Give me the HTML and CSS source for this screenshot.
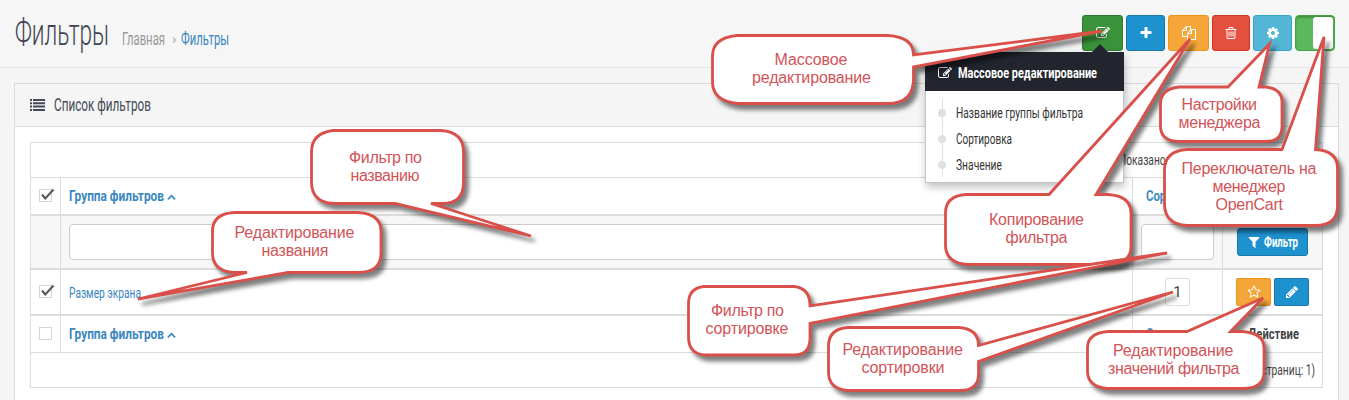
FILE: index.html
```html
<!DOCTYPE html>
<html lang="ru">
<head>
<meta charset="utf-8">
<title>Фильтры</title>
<link rel="stylesheet" href="styles.css">
</head>
<body>
<svg class="defs" width="0" height="0">
  <symbol id="edit" viewBox="0 0 1792 1792"><path d="M888 1184l116-116-152-152-116 116v56h96v96h56zm440-720q-16-16-33 1l-350 350q-17 17-1 33t33-1l350-350q17-17 1-33zm80 594v190q0 119-84.500 203.500t-203.500 84.500h-832q-119 0-203.500-84.500t-84.500-203.500v-832q0-119 84.500-203.500t203.500-84.500h832q63 0 117 25 15 7 18 23 3 17-9 29l-49 49q-14 14-32 8-23-6-45-6h-832q-66 0-113 47t-47 113v832q0 66 47 113t113 47h832q66 0 113-47t47-113v-126q0-13 9-22l64-64q15-15 35-7t20 29zm-96-738l288 288-672 672h-288v-288zm444 132l-92 92-288-288 92-92q28-28 68-28t68 28l152 152q28 28 28 68t-28 68z"/></symbol>
  <symbol id="plus" viewBox="0 0 1792 1792"><path d="M1600 736v192q0 40-28 68t-68 28h-416v416q0 40-28 68t-68 28h-192q-40 0-68-28t-28-68v-416h-416q-40 0-68-28t-28-68v-192q0-40 28-68t68-28h416v-416q0-40 28-68t68-28h192q40 0 68 28t28 68v416h416q40 0 68 28t28 68z"/></symbol>
  <symbol id="copy" viewBox="0 0 1792 1792"><path d="M1696 384q40 0 68 28t28 68v1216q0 40-28 68t-68 28h-960q-40 0-68-28t-28-68v-288h-544q-40 0-68-28t-28-68v-672q0-40 20-88t48-76l408-408q28-28 76-48t88-20h416q40 0 68 28t28 68v328q68-40 128-40h416zm-544 213l-299 299h299v-299zm-640-384l-299 299h299v-299zm196 647l316-316v-416h-384v416q0 40-28 68t-68 28h-416v640h512v-256q0-40 20-88t48-76zm956 804v-1152h-384v416q0 40-28 68t-68 28h-416v640h896z"/></symbol>
  <symbol id="trash" viewBox="0 0 1792 1792"><path d="M704 736v576q0 14-9 23t-23 9h-64q-14 0-23-9t-9-23v-576q0-14 9-23t23-9h64q14 0 23 9t9 23zm256 0v576q0 14-9 23t-23 9h-64q-14 0-23-9t-9-23v-576q0-14 9-23t23-9h64q14 0 23 9t9 23zm256 0v576q0 14-9 23t-23 9h-64q-14 0-23-9t-9-23v-576q0-14 9-23t23-9h64q14 0 23 9t9 23zm128 724v-948h-896v948q0 22 7 40.500t14.500 27 10.500 8.500h832q3 0 10.500-8.500t14.500-27 7-40.500zm-672-1076h448l-48-117q-7-9-17-11h-317q-10 2-17 11zm928 32v64q0 14-9 23t-23 9h-96v948q0 83-47 143.500t-113 60.500h-832q-66 0-113-58.500t-47-141.500v-952h-96q-14 0-23-9t-9-23v-64q0-14 9-23t23-9h309l70-167q15-37 54-63t79-26h320q40 0 79 26t54 63l70 167h309q14 0 23 9t9 23z"/></symbol>
  <symbol id="cog" viewBox="0 0 1792 1792"><path d="M1152 896q0-106-75-181t-181-75-181 75-75 181 75 181 181 75 181-75 75-181zm512-109v222q0 12-8 23t-20 13l-185 28q-19 54-39 91 35 50 107 138 10 12 10 25t-9 23q-27 37-99 108t-94 71q-12 0-26-9l-138-108q-44 23-91 38-16 136-29 186-7 28-36 28h-222q-14 0-24.500-8.500t-11.500-21.500l-28-184q-49-16-90-37l-141 107q-10 9-25 9-14 0-25-11-126-114-165-168-7-10-7-23 0-12 8-23 15-21 51-66.500t54-70.500q-27-50-41-99l-183-27q-13-2-21-12.500t-8-23.500v-222q0-12 8-23t19-13l186-28q14-46 39-92-40-57-107-138-10-12-10-24 0-10 9-23 26-36 98.500-107.500t94.500-71.500q13 0 26 10l138 107q44-23 91-38 16-136 29-186 7-28 36-28h222q14 0 24.500 8.500t11.500 21.500l28 184q49 16 90 37l142-107q9-9 24-9 13 0 25 10 129 119 165 170 7 8 7 22 0 12-8 23-15 21-51 66.500t-54 70.500q26 50 41 98l183 28q13 2 21 12.500t8 23.500z"/></symbol>
  <symbol id="filter" viewBox="0 0 1792 1792"><path d="M1595 295q17 41-14 70l-493 493v742q0 42-39 59-13 5-25 5-27 0-45-19l-256-256q-19-19-19-45v-486l-493-493q-31-29-14-70 17-39 59-39h1280q42 0 59 39z"/></symbol>
  <symbol id="star" viewBox="0 0 1792 1792"><path d="M1201 1004l306-297-422-62-189-382-189 382-422 62 306 297-73 421 378-199 377 199zm527-357q0 22-26 48l-363 354 86 500q1 7 1 20 0 50-41 50-19 0-40-12l-449-236-449 236q-22 12-40 12-21 0-31.500-14.500t-10.500-35.500q0-6 2-20l86-500-364-354q-25-27-25-48 0-37 56-46l502-73 225-455q19-41 49-41t49 41l225 455 502 73q56 9 56 46z"/></symbol>
  <symbol id="pencil" viewBox="0 0 1792 1792"><path d="M491 1536l91-91-235-235-91 91v107h128v128h107zm523-928q0-22-22-22-10 0-17 7l-542 542q-7 7-7 17 0 22 22 22 10 0 17-7l542-542q7-7 7-17zm-54-192l416 416-832 832h-416v-416zm683 96q0 53-37 90l-166 166-416-416 166-165q36-38 90-38 53 0 91 38l235 234q37 39 37 91z"/></symbol>
  <symbol id="up" viewBox="0 0 8 6"><path d="M.8 4.600L4 1.400l3.200 3.200" fill="none" stroke="currentColor" stroke-width="1.500"/></symbol>
  <symbol id="tick" viewBox="0 0 16 14"><path d="M3 6.500l3.300 4L14.500 1.500" fill="none" stroke="currentColor" stroke-width="2"/></symbol>
</svg>

<header class="page-header">
  <svg class="title" width="94" height="44"><text y="34" textLength="94" lengthAdjust="spacingAndGlyphs">Фильтры</text></svg>
  <nav class="crumbs">
    <svg class="label muted" width="43" height="22"><text y="17" textLength="43" lengthAdjust="spacingAndGlyphs">Главная</text></svg>
    <span class="sep">›</span>
    <svg class="label link" width="48" height="22"><text y="17" textLength="48" lengthAdjust="spacingAndGlyphs">Фильтры</text></svg>
  </nav>
  <div class="toolbar">
    <button class="btn green"><svg class="icon"><use href="#edit"/></svg></button>
    <button class="btn blue"><svg class="icon"><use href="#plus"/></svg></button>
    <button class="btn orange"><svg class="icon"><use href="#copy"/></svg></button>
    <button class="btn red"><svg class="icon"><use href="#trash"/></svg></button>
    <button class="btn cyan"><svg class="icon"><use href="#cog"/></svg></button>
    <div class="toggle"><i></i></div>
  </div>
</header>

<main class="panel">
  <div class="panel-heading">
    <svg class="list-icon" width="16" height="12"><path d="M0 0h2v2H0zM0 3.300h2v2H0zM0 6.600h2v2H0zM0 9.900h2v2H0zM3 0h12v2H3zM3 3.300h12v2H3zM3 6.600h12v2H3zM3 9.900h12v2H3z"/></svg>
    <svg class="label" width="97" height="22"><text y="17" textLength="97" lengthAdjust="spacingAndGlyphs">Список фильтров</text></svg>
  </div>
  <div class="table">
    <div class="row pages"><svg class="small" width="196" height="20"><text y="15" textLength="196" lengthAdjust="spacingAndGlyphs">Показано с 1 по 1 из 1 (всего страниц: 1)</text></svg></div>
    <div class="row head thick">
      <div class="check"><span class="box"><svg class="tick"><use href="#tick"/></svg></span></div>
      <div class="name"><svg class="bold" width="95" height="20"><text y="15" textLength="95" lengthAdjust="spacingAndGlyphs">Группа фильтров</text></svg><svg class="up"><use href="#up"/></svg></div>
      <div class="sort"><svg class="bold" width="64" height="20"><text y="15" textLength="64" lengthAdjust="spacingAndGlyphs">Сортировка</text></svg></div>
      <div class="action"><svg class="bold dark" width="51" height="20"><text y="15" textLength="51" lengthAdjust="spacingAndGlyphs">Действие</text></svg></div>
    </div>
    <div class="row filter thick">
      <div class="check"></div>
      <div class="name"><input class="field" type="text"></div>
      <div class="sort"><input class="field" type="text"></div>
      <div class="action"><button class="btn blue apply"><svg class="icon"><use href="#filter"/></svg><svg class="bold white" width="34" height="20"><text y="15" textLength="34" lengthAdjust="spacingAndGlyphs">Фильтр</text></svg></button></div>
    </div>
    <div class="row data thick">
      <div class="check"><span class="box"><svg class="tick"><use href="#tick"/></svg></span></div>
      <div class="name"><svg class="small link" width="72" height="20"><text y="16" textLength="72" lengthAdjust="spacingAndGlyphs">Размер экрана</text></svg></div>
      <div class="sort"><span class="order">1</span></div>
      <div class="action"><button class="btn orange sm"><svg class="icon"><use href="#star"/></svg></button><button class="btn blue sm"><svg class="icon"><use href="#pencil"/></svg></button></div>
    </div>
    <div class="row head">
      <div class="check"><span class="box"></span></div>
      <div class="name"><svg class="bold" width="95" height="20"><text y="15" textLength="95" lengthAdjust="spacingAndGlyphs">Группа фильтров</text></svg><svg class="up"><use href="#up"/></svg></div>
      <div class="sort"><svg class="bold" width="64" height="20"><text y="15" textLength="64" lengthAdjust="spacingAndGlyphs">Сортировка</text></svg></div>
      <div class="action"><svg class="bold dark" width="51" height="20"><text y="15" textLength="51" lengthAdjust="spacingAndGlyphs">Действие</text></svg></div>
    </div>
    <div class="row pages last"><svg class="small" width="196" height="20"><text y="15" textLength="196" lengthAdjust="spacingAndGlyphs">Показано с 1 по 1 из 1 (всего страниц: 1)</text></svg></div>
  </div>
</main>

<div class="menu">
  <div class="menu-head"><svg class="icon"><use href="#edit"/></svg><svg class="bold white" width="139" height="22"><text y="16" textLength="139" lengthAdjust="spacingAndGlyphs">Массовое редактирование</text></svg></div>
  <ul>
    <li><svg class="small" width="127" height="20"><text y="15" textLength="127" lengthAdjust="spacingAndGlyphs">Название группы фильтра</text></svg></li>
    <li><svg class="small" width="56" height="20"><text y="15" textLength="56" lengthAdjust="spacingAndGlyphs">Сортировка</text></svg></li>
    <li><svg class="small" width="46" height="20"><text y="15" textLength="46" lengthAdjust="spacingAndGlyphs">Значение</text></svg></li>
  </ul>
</div>

<svg class="callouts" width="1349" height="400">
  <g>
    <path d="M737 35.500H888Q913.500 37 913.500 55L1102 31 913.500 67V78Q913.500 103.500 888 103.500H738Q712.500 101 712.500 82V56Q712.500 38 737 35.500z"/>
    <text x="774.500" y="65" textLength="73">Массовое</text><text x="752" y="83" textLength="119">редактирование</text>
  </g>
  <g>
    <path d="M333 130.500H441Q463.500 132 463.500 152V182Q463.500 203.500 443 203.500H431L531 236 395 203.500H333Q311.500 202 311.500 182V152Q311.500 133 333 130.500z"/>
    <text x="349" y="163" textLength="73">Фильтр по</text><text x="350.500" y="181" textLength="69">названию</text>
  </g>
  <g>
    <path d="M234 212.500H358Q381 214 381 231V253Q381 272.500 358 272.500H288L138 299 247 272.500H234Q212.500 271 212.500 253V231Q212.500 214 234 212.500z"/>
    <text x="234.500" y="238" textLength="120">Редактирование</text><text x="261.500" y="256" textLength="67">названия</text>
  </g>
  <g>
    <path d="M966 194.500H1049L1190 39 1096 194.500H1108Q1131 196 1131 213V246Q1131 264.500 1108 264.500H968Q945.500 263 945.500 245V213Q945.500 196 966 194.500z"/>
    <text x="989" y="225" textLength="95">Копирование</text><text x="1005.500" y="243" textLength="62">фильтра</text>
  </g>
  <g>
    <path d="M704 286.500H794Q810 288 810 306L1167 253 810 323.500V338Q810 355 794 355H704Q688.500 353 688.500 337V304Q688.500 288 704 286.500z"/>
    <text x="711" y="316" textLength="73">Фильтр по</text><text x="705.500" y="334" textLength="83">сортировке</text>
  </g>
  <g>
    <path d="M848 327.500H959Q978.500 329 978.500 345.500L1173 292 978.500 361.500V374Q978.500 390.500 960 390.500H848Q828.500 389 828.500 372V346Q828.500 329 848 327.500z"/>
    <text x="842.500" y="355" textLength="120.500">Редактирование</text><text x="861.500" y="373" textLength="83">сортировки</text>
  </g>
  <g>
    <path d="M1179 87H1228L1269.500 44 1259 87H1266Q1282 89 1282 102V126Q1282 141.500 1266 141.500H1177Q1160.500 140 1160.500 126V104Q1160.500 89 1179 87z"/>
    <text x="1181.500" y="110" textLength="75.500">Настройки</text><text x="1178.500" y="128" textLength="82">менеджера</text>
  </g>
  <g>
    <path d="M1187 149.500H1282L1324 37 1315.500 149.500Q1337.500 151 1337.500 168V206Q1337.500 225.500 1315 225.500H1187Q1164.500 224 1164.500 204V170Q1164.500 151 1187 149.500z"/>
    <text x="1181.500" y="174" textLength="135">Переключатель на</text><text x="1212.500" y="192" textLength="73">менеджер</text><text x="1215.500" y="210" textLength="67.500">OpenCart</text>
  </g>
  <g>
    <path d="M1108 331.500H1187L1263 298 1230.500 331.500H1242Q1264 333 1264 348V372Q1264 388.500 1243 388.500H1108Q1087.500 387 1087.500 371V348Q1087.500 333 1108 331.500z"/>
    <text x="1113" y="356" textLength="120.500">Редактирование</text><text x="1108" y="374" textLength="131.500">значений фильтра</text>
  </g>
</svg>
</body>
</html>
```
FILE: styles.css
```css
* { box-sizing: border-box; }
body {
  margin: 0;
  height: 400px;
  overflow: hidden;
  position: relative;
  background: #f5f5f5;
  font-family: Roboto, "Open Sans", sans-serif;
  color: #444;
}
svg { display: block; flex: none; overflow: visible; fill: currentColor; }
.defs { position: absolute; }
button { font: inherit; padding: 0; }

.page-header {
  display: flex;
  height: 68px;
  padding-left: 15px;
  padding-right: 14px;
  background: #f6f6f6;
  border-bottom: 1px solid #e6e6e6;
}
.title { margin-top: 11px; font-size: 36px; font-weight: 300; color: #3f4452; }
.label { font-size: 18px; color: #444a57; }
.label.muted { color: #999; }
.link, .label.link { color: #3a87c0; }
.crumbs { display: flex; margin: 28px 0 0 13px; }
.sep { width: 16px; padding-left: 7px; font-size: 15px; line-height: 23px; color: #aaa; }
.toolbar { display: flex; gap: 3px; margin: 15px 0 0 auto; }
.btn {
  display: flex;
  align-items: center;
  justify-content: center;
  width: 38px;
  height: 36px;
  border: 1px solid;
  border-radius: 3px;
  color: #fff;
}
.icon { width: 14px; height: 14px; }
.green { width: 41px; background: #3a933a; border-color: #2f7a31; }
.blue { background: #1e91cf; border-color: #1978ab; }
.orange { background: #f4a638; border-color: #ee9416; }
.toolbar .blue { width: 39px; }
.toolbar .orange { width: 41px; }
.red { background: #e3503e; border-color: #cb3725; }
.cyan { width: 39px; background: #53b6d5; border-color: #36a5c7; }
.toggle {
  width: 40px;
  height: 36px;
  padding: 1px;
  background: #5cb85c;
  border: 1px solid #46a046;
  border-radius: 4px;
  box-shadow: inset 0 2px 2px rgba(0, 70, 0, .3);
}
.toggle i { display: block; width: 20px; height: 32px; margin-left: auto; background: #fff; border-radius: 3px; }

.panel {
  width: 1325px;
  height: 330px;
  margin: 15px 0 0 14px;
  border: 1px solid #dadada;
  background: #fff;
}
.panel-heading {
  display: flex;
  align-items: center;
  height: 43px;
  padding-left: 15px;
  gap: 8px;
  background: #f5f5f5;
  border-bottom: 1px solid #dadada;
  color: #444a57;
}
.table { width: 1293px; margin: 15px 0 0 15px; border: 1px solid #dcdcdc; }
.row {
  display: grid;
  grid-template-columns: 30px 1072px 90px 99px;
  border-bottom: 1px solid #dcdcdc;
}
.row.thick { border-bottom-width: 2px; }
.row > div { display: flex; align-items: center; border-right: 1px solid #dcdcdc; }
.row > div:last-child { border-right: 0; }
.row.pages { display: flex; align-items: center; justify-content: flex-end; height: 35px; padding-right: 7px; }
.row.last { height: 34px; border-bottom: 0; }
.row.head { height: 37px; }
.row.head.thick { height: 38px; }
.row.filter { height: 54px; background: #f7f7f7; }
.row.data { height: 46px; }
.row .check { justify-content: center; }
.row .name { padding: 0 8px; }
.row .sort { justify-content: center; padding: 0 8px; }
.row .action { justify-content: center; gap: 3px; }
.row.head .action { padding-left: 1px; }
.box { width: 13px; height: 13px; margin-top: -2px; border: 1px solid #d5d5d5; background: #fff; }
.tick { width: 16px; height: 14px; margin: -2px 0 0 -1px; color: #555; }
.bold { font-size: 15.500px; font-weight: 700; color: #3a87c0; }
.bold.dark { color: #444; }
.bold.white { color: #fff; }
.up { width: 9px; height: 7px; margin: 3px 0 0 3px; color: #3a87c0; }
.small { font-size: 15px; }
.field { width: 100%; height: 36px; border: 1px solid #ccc; border-radius: 4px; background: #fff; }
.apply { width: 71px; height: 28px; gap: 3px; }
.apply .bold { font-size: 14.500px; }
.row .orange, .row .sm { width: 35px; height: 28px; border-radius: 2px; }
.order {
  width: 25px;
  height: 28px;
  border: 1px solid #ddd;
  border-radius: 2px;
  font-size: 15px;
  line-height: 26px;
  text-align: center;
}

.menu {
  position: absolute;
  left: 925px;
  top: 52px;
  width: 199px;
  height: 131px;
  background: #fff;
  border: 1px solid #c4c4c4;
  border-top: 0;
  box-shadow: 1px 4px 8px rgba(0, 0, 0, .25);
}
.menu-head {
  display: flex;
  align-items: center;
  gap: 6px;
  height: 39px;
  margin: 0 -1px;
  padding: 2px 0 0 13px;
  background: #22252e;
  color: #fff;
}
.menu-head::before {
  content: "";
  position: absolute;
  left: 166px;
  top: -8px;
  border: 8px solid transparent;
  border-top: 0;
  border-bottom-color: #22252e;
}
.menu ul {
  list-style: none;
  margin: 8px 0 0 16px;
  padding: 2px 0 0;
  height: 78px;
  border-left: 1px solid #e0e0e0;
  color: #333;
}
.menu li { display: flex; align-items: center; height: 26px; gap: 10px; margin-left: -5px; padding-bottom: 3px; }
.menu li::before { content: ""; width: 8px; height: 8px; margin-top: 1px; border-radius: 50%; background: #dfdfdf; }

.callouts { position: absolute; left: 0; top: 0; font-family: "Liberation Sans", sans-serif; font-size: 16px; }
.callouts path {
  fill: #fff;
  stroke: #d9504b;
  stroke-width: 2.800;
  filter: drop-shadow(4px 5px 2px rgba(0, 0, 0, .5));
}
.callouts text { fill: #d25459; }
```
